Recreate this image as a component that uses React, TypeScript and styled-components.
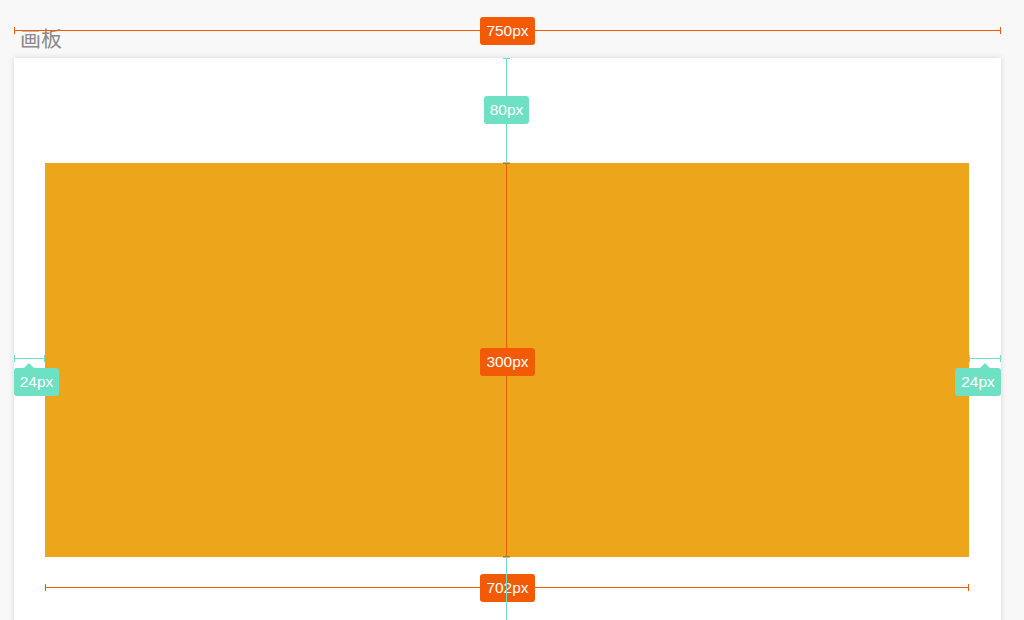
import React from "react";
import styled, { createGlobalStyle } from "styled-components";

const GlobalStyle = createGlobalStyle`
  html, body { margin: 0; padding: 0; background: #f8f8f8; overflow: hidden; }
  body { font-family: "Liberation Sans", "Noto Sans CJK SC", Arial, sans-serif; }
`;

const ORANGE = "#f25a05";
const TEAL = "#6ee0c3";

const Stage = styled.div`
  position: relative;
  width: 1024px;
  height: 620px;
  overflow: hidden;
  background: #f8f8f8;
  display: flex;
  flex-direction: column;
`;

const Header = styled.div`
  flex: none;
  height: 58px;
  box-sizing: border-box;
  padding: 23px 0 0 20px;
  display: flex;
  align-items: flex-start;
`;

const Title = styled.div`
  font-family: "Noto Sans CJK SC", sans-serif;
  font-size: 21px;
  line-height: 28px;
  color: #8a8a8a;
`;

const Card = styled.div`
  margin-left: 14px;
  width: 987px;
  height: 600px;
  flex: none;
  background: #fff;
  box-shadow: 0 0 6px rgba(0, 0, 0, 0.14);
  box-sizing: border-box;
  padding: 105px 32px 0 31px;
  display: flex;
  align-items: flex-start;
`;

const Block = styled.div`
  flex: none;
  width: 924px;
  height: 394px;
  background: #eda51b;
`;

const HLine = styled.div<{ $x: number; $y: number; $w: number; $c: string }>`
  position: absolute;
  left: ${(p) => p.$x}px;
  top: ${(p) => p.$y}px;
  width: ${(p) => p.$w}px;
  height: 1px;
  background: ${(p) => p.$c};
  &::before, &::after {
    content: "";
    position: absolute;
    top: -3px;
    width: 1px;
    height: 7px;
    background: ${(p) => p.$c};
  }
  &::before { left: 0; }
  &::after { right: 0; }
`;

const VLine = styled.div<{ $x: number; $y: number; $h: number; $c: string; $capBottom?: boolean }>`
  position: absolute;
  left: ${(p) => p.$x}px;
  top: ${(p) => p.$y}px;
  width: 1px;
  height: ${(p) => p.$h}px;
  background: ${(p) => p.$c};
  &::before, &::after {
    content: "";
    position: absolute;
    left: -3px;
    width: 7px;
    height: 1px;
    background: ${(p) => p.$c};
  }
  &::before { top: 0; }
  &::after { bottom: 0; display: ${(p) => (p.$capBottom === false ? "none" : "block")}; }
`;

const Tag = styled.div<{ $x: number; $y: number; $w: number; $c: string; $notch?: number }>`
  position: absolute;
  left: ${(p) => p.$x}px;
  top: ${(p) => p.$y}px;
  width: ${(p) => p.$w}px;
  height: 28px;
  border-radius: 3px;
  background: ${(p) => p.$c};
  color: #fff;
  font-family: "Liberation Sans", Arial, sans-serif;
  font-size: 15.5px;
  line-height: 28px;
  text-align: center;
  &::before {
    content: "";
    display: ${(p) => (p.$notch === undefined ? "none" : "block")};
    position: absolute;
    top: -5px;
    left: ${(p) => (p.$notch ?? 0) - 5}px;
    border-left: 5px solid transparent;
    border-right: 5px solid transparent;
    border-bottom: 5px solid ${(p) => p.$c};
  }
`;

export default function App() {
  return (
    <>
      <GlobalStyle />
      <Stage>
        <Header>
          <Title>画板</Title>
        </Header>
        <Card>
          <Block />
        </Card>

        <HLine $x={14} $y={30} $w={987} $c={ORANGE} />
        <Tag $x={480} $y={17} $w={55} $c={ORANGE}>750px</Tag>

        <VLine $x={506} $y={58} $h={105} $c={TEAL} />
        <Tag $x={484} $y={96} $w={45} $c={TEAL}>80px</Tag>

        <VLine $x={506} $y={163} $h={394} $c={ORANGE} />
        <Tag $x={480} $y={348} $w={55} $c={ORANGE}>300px</Tag>

        <HLine $x={14} $y={358} $w={31} $c={TEAL} />
        <Tag $x={14} $y={368} $w={45} $c={TEAL} $notch={15}>24px</Tag>

        <HLine $x={969} $y={358} $w={32} $c={TEAL} />
        <Tag $x={955} $y={368} $w={46} $c={TEAL} $notch={30}>24px</Tag>

        <HLine $x={45} $y={587} $w={924} $c={ORANGE} />
        <Tag $x={480} $y={574} $w={55} $c={ORANGE}>702px</Tag>
        <VLine $x={506} $y={557} $h={70} $c={TEAL} $capBottom={false} />
      </Stage>
    </>
  );
}
